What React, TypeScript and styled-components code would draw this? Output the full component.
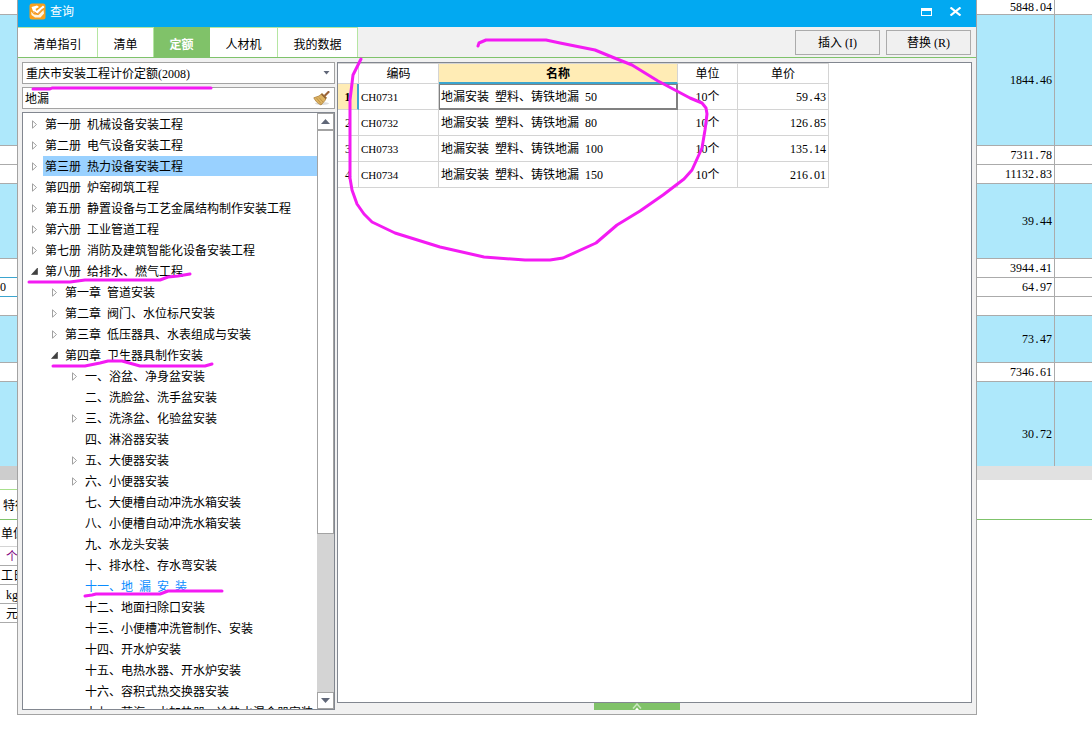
import React, { useState } from 'react';
import styled, { createGlobalStyle, css } from 'styled-components';

const Global = createGlobalStyle`
  *, *::before, *::after { box-sizing: border-box; }
  html, body { margin: 0; padding: 0; background: #fff; }
  body, button, input, select {
    font-family: 'Liberation Serif', 'Noto Sans CJK SC', serif;
    font-size: 12px;
    line-height: 18px;
    color: #000;
  }
  button { padding: 0; cursor: default; }
`;

const Desktop = styled.div`
  position: relative;
  display: grid;
  grid-template-columns: 17px minmax(0, 1fr) 115px;
  height: 100vh;
  overflow: hidden;
`;

/* ---------- sheet behind the dialog ---------- */

const Strip = styled.div`
  min-width: 0;
  overflow: hidden;
`;

const SheetTable = styled.table`
  width: 100%;
  table-layout: fixed;
  border-collapse: separate;
  border-spacing: 0;
`;

const SheetCell = styled.td<{ $h: number; $blue?: boolean; $line?: string; $side?: boolean; $top?: number; $align?: string }>`
  height: ${p => p.$h}px;
  padding: ${p => p.$top || 0}px 2px 0 0;
  text-align: ${p => p.$align || 'right'};
  white-space: nowrap;
  line-height: 14px;
  background: ${p => (p.$blue ? '#aee8fb' : '#fff')};
  border-bottom: ${p => (p.$line === 'none' ? '0' : `1px solid ${p.$line || '#ababab'}`)};
  border-right: ${p => (p.$side ? '1px solid #ababab' : '0')};
`;

const GrayBar = styled.div<{ $color: string }>`
  height: 14px;
  background: ${p => p.$color};
`;

const LowerPane = styled.div`
  height: 40px;
  border-bottom: 1px solid #7fc36b;
`;

const LowerTab = styled.div`
  height: 31px;
  margin-top: 9px;
  padding-left: 3px;
  line-height: 32px;
  white-space: nowrap;
  border-top: 1px solid #a8e08c;
  border-bottom: 1px solid #7fc36b;
`;

const UnitRow = styled.div<{ $h: number; $indent: number; $purple?: boolean; $line: string }>`
  height: ${p => p.$h}px;
  padding-left: ${p => p.$indent}px;
  line-height: ${p => p.$h + 1}px;
  white-space: nowrap;
  color: ${p => (p.$purple ? '#800080' : '#000')};
  border-bottom: 1px solid ${p => p.$line};
`;

/* ---------- dialog frame ---------- */

const Dialog = styled.section`
  display: flex;
  flex-direction: column;
  height: calc(100vh - 27px);
  min-width: 0;
  background: #f1f1f1;
  border: 1px solid #a3a3a3;
  border-top: 0;
`;

const TitleBar = styled.header`
  display: flex;
  align-items: center;
  height: 27px;
  flex: none;
  padding: 0 14px 4px 11px;
  background: #02a9f1;
  color: #fff;
`;

const Title = styled.h1`
  flex: 1;
  margin: 0 0 0 4px;
  font-size: 12px;
  font-weight: 400;
  line-height: 20px;
`;

const WindowButton = styled.button`
  display: flex;
  margin-left: 17px;
  border: 0;
  background: none;
`;

const TabBar = styled.nav`
  display: flex;
  align-items: flex-start;
  flex: none;
  height: 31px;
  padding-right: 5px;
  border-bottom: 1px solid #7fc36b;
`;

const Tab = styled.button<{ $w: number; $active?: boolean }>`
  width: ${p => p.$w}px;
  height: 30px;
  padding-top: 4px;
  border: 0;
  border-top: 1px solid #b5e6a2;
  border-right: 1px solid #b5e6a2;
  background: #fff;
  ${p =>
    p.$active &&
    css`
      background: #80c269;
      border-color: #80c269;
      color: #fff;
      font-weight: 700;
    `}
`;

const Actions = styled.div`
  display: flex;
  gap: 6px;
  margin: 3px 0 0 auto;
`;

const ActionButton = styled.button`
  width: 85px;
  height: 25px;
  padding-top: 1px;
  border: 1px solid #ababab;
  background: #f0f0f0;
`;

const Body = styled.div`
  display: flex;
  flex: 1;
  gap: 2px;
  min-height: 0;
  padding: 4px;
`;

/* ---------- left column ---------- */

const Side = styled.div`
  display: flex;
  flex-direction: column;
  flex: none;
  gap: 3px;
  width: 313px;
`;

const Field = styled.div`
  display: flex;
  align-items: center;
  flex: none;
  height: 22px;
  padding-right: 4px;
  border: 1px solid #a3a3a3;
  background: #fff;
`;

const LibrarySelect = styled.select`
  flex: 1;
  height: 20px;
  padding: 1px 0 0 3px;
  border: 0;
  outline: 0;
  background: none;
  appearance: none;
`;

const SearchInput = styled.input`
  flex: 1;
  min-width: 0;
  height: 20px;
  padding: 0 0 0 2px;
  border: 0;
  outline: 0;
  background: none;
`;

const IconButton = styled.button`
  display: flex;
  border: 0;
  background: none;
`;

const TreeFrame = styled.div`
  display: flex;
  flex: 1;
  min-height: 0;
  border: 1px solid #828790;
  background: #fff;
`;

const TreeList = styled.ul`
  flex: 1;
  min-width: 0;
  margin: 0;
  padding: 1px 0 0;
  overflow: hidden;
  list-style: none;
`;

const TreeItem = styled.li<{ $level: number }>`
  display: flex;
  align-items: center;
  height: 21px;
  padding-left: ${p => 8 + p.$level * 20}px;
`;

const Toggle = styled.button`
  display: flex;
  flex: none;
  width: 12px;
  border: 0;
  background: none;
`;

const TreeLabel = styled.span<{ $selected?: boolean; $match?: boolean }>`
  flex: 1;
  height: 20px;
  margin-bottom: 1px;
  padding-left: 2px;
  overflow: hidden;
  line-height: 22px;
  white-space: nowrap;
  color: ${p => (p.$match ? '#0a8cff' : '#000')};
  background: ${p => (p.$selected ? '#99d1ff' : 'transparent')};
`;

const HalfWidth = styled.span`
  font-family: 'Liberation Mono', monospace;
  font-size: 10px;
  line-height: 1;
`;

const ScrollTrack = styled.div`
  display: flex;
  flex-direction: column;
  flex: none;
  width: 17px;
  background: #d4d4d4;
`;

const ScrollButton = styled.button`
  display: flex;
  align-items: center;
  justify-content: center;
  flex: none;
  height: 17px;
  border: 1px solid #a3a3a3;
  background: #fff;
`;

const ScrollThumb = styled.div`
  flex: 403;
  border: 1px solid #a3a3a3;
  background: #fff;
`;

const ScrollRest = styled.div`
  flex: 159;
`;

/* ---------- result panel ---------- */

const Main = styled.div`
  display: flex;
  flex: 1;
  flex-direction: column;
  align-items: center;
  min-width: 0;
`;

const ResultFrame = styled.div`
  flex: 1;
  width: 100%;
  min-height: 0;
  border: 1px solid #828790;
  background: #fff;
`;

const ResultTable = styled.table`
  width: 491px;
  table-layout: fixed;
  border-collapse: separate;
  border-spacing: 0;
  border-top: 1px solid #d4d4d4;
`;

const HeadCell = styled.th<{ $w: number; $active?: boolean }>`
  width: ${p => p.$w}px;
  height: 20px;
  padding: 1px 0 0;
  line-height: 16px;
  font-weight: ${p => (p.$active ? 700 : 400)};
  background: ${p => (p.$active ? '#ffecb5' : '#fff')};
  border-right: 1px solid #d4d4d4;
  border-bottom: ${p => (p.$active ? '2px solid #3ba5cf' : '1px solid #d4d4d4')};
`;

const Cell = styled.td<{ $align?: string; $small?: boolean }>`
  height: 26px;
  padding: 0 2px;
  font-size: ${p => (p.$small ? 11 : 12)}px;
  text-align: ${p => p.$align || 'left'};
  white-space: nowrap;
  border-right: 1px solid #d4d4d4;
  border-bottom: 1px solid #d4d4d4;
`;

const FocusCell = styled(Cell)`
  box-shadow: inset 0 0 0 1px #808080;
  border-color: #808080;
`;

const RowNumber = styled.th<{ $active?: boolean }>`
  height: 26px;
  padding: 0;
  font-weight: ${p => (p.$active ? 700 : 400)};
  background: ${p => (p.$active ? '#ffecb5' : '#fff')};
  border-right: ${p => (p.$active ? '2px solid #3ba5cf' : '1px solid #d4d4d4')};
  border-bottom: 1px solid #d4d4d4;
`;

const ExpandHandle = styled.button`
  display: flex;
  justify-content: center;
  flex: none;
  width: 86px;
  height: 7px;
  margin-right: 36px;
  border: 0;
  background: #80c269;
`;

const Ink = styled.svg`
  position: absolute;
  top: 0;
  left: 0;
  pointer-events: none;
`;

/* ---------- data ---------- */

type SheetRow = { h: number; value?: string; blue?: boolean; left?: string; accent?: boolean; top?: number; last?: boolean };

const sheetRows: SheetRow[] = [
  { h: 15, value: '5848.04' },
  { h: 131, value: '1844.46', blue: true },
  { h: 19, value: '7311.78' },
  { h: 19, value: '11132.83' },
  { h: 75, value: '39.44', blue: true },
  { h: 19, value: '3944.41', accent: true },
  { h: 19, value: '64.97', left: '0', accent: true },
  { h: 19 },
  { h: 47, value: '73.47', blue: true },
  { h: 19, value: '7346.61' },
  { h: 84, value: '30.72', blue: true, top: 20, last: true },
];

type Node = { level: number; text: string; state?: 'open' | 'closed'; match?: boolean };

const nodes: Node[] = [
  { level: 0, text: '第一册 机械设备安装工程', state: 'closed' },
  { level: 0, text: '第二册 电气设备安装工程', state: 'closed' },
  { level: 0, text: '第三册 热力设备安装工程', state: 'closed' },
  { level: 0, text: '第四册 炉窑砌筑工程', state: 'closed' },
  { level: 0, text: '第五册 静置设备与工艺金属结构制作安装工程', state: 'closed' },
  { level: 0, text: '第六册 工业管道工程', state: 'closed' },
  { level: 0, text: '第七册 消防及建筑智能化设备安装工程', state: 'closed' },
  { level: 0, text: '第八册 给排水、燃气工程', state: 'open' },
  { level: 1, text: '第一章 管道安装', state: 'closed' },
  { level: 1, text: '第二章 阀门、水位标尺安装', state: 'closed' },
  { level: 1, text: '第三章 低压器具、水表组成与安装', state: 'closed' },
  { level: 1, text: '第四章 卫生器具制作安装', state: 'open' },
  { level: 2, text: '一、浴盆、净身盆安装', state: 'closed' },
  { level: 2, text: '二、洗脸盆、洗手盆安装' },
  { level: 2, text: '三、洗涤盆、化验盆安装', state: 'closed' },
  { level: 2, text: '四、淋浴器安装' },
  { level: 2, text: '五、大便器安装', state: 'closed' },
  { level: 2, text: '六、小便器安装', state: 'closed' },
  { level: 2, text: '七、大便槽自动冲洗水箱安装' },
  { level: 2, text: '八、小便槽自动冲洗水箱安装' },
  { level: 2, text: '九、水龙头安装' },
  { level: 2, text: '十、排水栓、存水弯安装' },
  { level: 2, text: '十一、地 漏 安 装', match: true },
  { level: 2, text: '十二、地面扫除口安装' },
  { level: 2, text: '十三、小便槽冲洗管制作、安装' },
  { level: 2, text: '十四、开水炉安装' },
  { level: 2, text: '十五、电热水器、开水炉安装' },
  { level: 2, text: '十六、容积式热交换器安装' },
  { level: 2, text: '十七、蒸汽、水加热器、冷热水混合器安装' },
];

const results = [
  { code: 'CH0731', name: '地漏安装 塑料、铸铁地漏 50', unit: '10个', price: '59.43' },
  { code: 'CH0732', name: '地漏安装 塑料、铸铁地漏 80', unit: '10个', price: '126.85' },
  { code: 'CH0733', name: '地漏安装 塑料、铸铁地漏 100', unit: '10个', price: '135.14' },
  { code: 'CH0734', name: '地漏安装 塑料、铸铁地漏 150', unit: '10个', price: '216.01' },
];

const tabs = [
  { label: '清单指引', w: 80 },
  { label: '清单', w: 56 },
  { label: '定额', w: 56 },
  { label: '人材机', w: 68 },
  { label: '我的数据', w: 80 },
];

/* Text whose spaces and full stops are half an ideograph wide. */
function Spaced({ text }: { text: string }) {
  return (
    <>
      {text.split(/([ .])/).map((part, i) => (i % 2 ? <HalfWidth key={i}>{part}</HalfWidth> : part))}
    </>
  );
}

function LogoIcon() {
  return (
    <svg width="17" height="17" viewBox="0 0 17 17" aria-hidden="true">
      <rect x="0.5" y="0.5" width="16" height="16" rx="2.5" fill="#f9a01b" />
      <path d="M2.500 4L8 2.500 10 4 6.500 6 7.500 8 14 2.500 15.500 4 9 11 4.500 9.500z" fill="#fff" />
      <path d="M2 8.500l3 3 4.500 0.500 5-5 0.500 3.500-3.500 4H6L2.500 12z" fill="#fff4e0" />
      <path d="M4.500 8.500l4 2.500 5.500-5.500" stroke="#e87d0c" fill="none" />
    </svg>
  );
}

function BroomIcon() {
  return (
    <svg width="17" height="15" viewBox="0 0 17 15" aria-hidden="true">
      <ellipse cx="9" cy="12.500" rx="7" ry="1.500" fill="#dcdcdc" />
      <path d="M15.500 1L12 4.500" stroke="#9a6238" strokeWidth="2.200" strokeLinecap="round" />
      <path d="M9 2.500l4.500 4-1.500 3-4 4.500C4.500 12.500 2 9.500 0.800 6.800L6 5z" fill="#ddb363" stroke="#a5762f" strokeWidth="0.700" />
      <path d="M3.500 7l4.500 5.500M6 6.500l4 4.500" stroke="#b98a3f" strokeWidth="0.800" />
      <path d="M8.500 3l4.500 4.500" stroke="#8a5a30" strokeWidth="1.300" />
    </svg>
  );
}

function Arrow({ open }: { open: boolean }) {
  return (
    <svg width="7" height="9" viewBox="0 0 7 9" aria-hidden="true">
      {open ? (
        <path d="M6.500 1v6.500H0.500z" fill="#404040" stroke="#262626" strokeWidth="0.500" />
      ) : (
        <path d="M1.500 0.800L5.500 4.500 1.500 8.200z" fill="#fff" stroke="#a0a0a0" />
      )}
    </svg>
  );
}

function Triangle({ up }: { up?: boolean }) {
  return (
    <svg width="9" height="5" viewBox="0 0 9 5" aria-hidden="true">
      <path d={up ? 'M0 5L4.500 0 9 5z' : 'M0 0L4.500 5 9 0z'} fill="#606778" />
    </svg>
  );
}

const inkPaths = [
  'M33 89H50L52 88H211',
  'M29 282H70L85 280H160L168 277 178 276 190 274',
  'M53 366H85L100 363 108 361H122L140 366H205L212 364',
  'M85 596L92 595 96 594H160L168 591H222',
  'M478 46L479 43 486 40H546L560 43 595 50 612 57 632 65 658 81 690 98 702 103 706 108 707 114 705 130 702 148 692 170 684 179 663 195 640 211 617 225 596 243 563 258 550 260H525L484 257 440 247 395 233 372 222 364 214 357 204 352 190 350 178V100L353 75 361 59',
];

export default function App() {
  const [activeTab, setActiveTab] = useState('定额');
  const [query, setQuery] = useState('地漏');
  const [selected, setSelected] = useState(2);

  return (
    <>
      <Global />
      <Desktop>
        <Strip>
          <SheetTable>
            <tbody>
              {sheetRows.map((r, i) => (
                <tr key={i}>
                  <SheetCell
                    $h={r.h}
                    $blue={r.blue}
                    $align="left"
                    $line={r.last ? 'none' : r.accent ? '#3ba5cf' : undefined}
                  >
                    {r.left}
                  </SheetCell>
                </tr>
              ))}
            </tbody>
          </SheetTable>
          <GrayBar $color="#cdcdcd" />
          <LowerTab>特征</LowerTab>
          <UnitRow $h={27} $indent={1} $line="#d4d4d4">单位</UnitRow>
          <UnitRow $h={19} $indent={6} $purple $line="#ababab">个</UnitRow>
          <UnitRow $h={19} $indent={1} $line="#ababab">工日</UnitRow>
          <UnitRow $h={19} $indent={6} $line="#ababab">kg</UnitRow>
          <UnitRow $h={19} $indent={6} $line="#ababab">元</UnitRow>
        </Strip>

        <Dialog aria-label="查询">
          <TitleBar>
            <LogoIcon />
            <Title>查询</Title>
            <WindowButton aria-label="最大化">
              <svg width="11" height="8" viewBox="0 0 11 8" aria-hidden="true">
                <path d="M0 0h11v8H0zM1 3v4h9V3z" fill="#fff" fillRule="evenodd" />
              </svg>
            </WindowButton>
            <WindowButton aria-label="关闭">
              <svg width="13" height="9" viewBox="0 0 13 9" aria-hidden="true">
                <path d="M1.500 0.500l10 8M11.500 0.500l-10 8" stroke="#fff" strokeWidth="2.200" />
              </svg>
            </WindowButton>
          </TitleBar>

          <TabBar>
            {tabs.map(t => (
              <Tab key={t.label} $w={t.w} $active={t.label === activeTab} onClick={() => setActiveTab(t.label)}>
                {t.label}
              </Tab>
            ))}
            <Actions>
              <ActionButton>插入 (I)</ActionButton>
              <ActionButton>替换 (R)</ActionButton>
            </Actions>
          </TabBar>

          <Body>
            <Side>
              <Field>
                <LibrarySelect aria-label="定额库">
                  <option>重庆市安装工程计价定额(2008)</option>
                </LibrarySelect>
                <svg width="7" height="4" viewBox="0 0 7 4" aria-hidden="true">
                  <path d="M0.500 0h6L3.500 3.500z" fill="#606778" />
                </svg>
              </Field>
              <Field>
                <SearchInput aria-label="搜索" value={query} onChange={e => setQuery(e.target.value)} />
                <IconButton aria-label="清除" onClick={() => setQuery('')}>
                  <BroomIcon />
                </IconButton>
              </Field>
              <TreeFrame>
                <TreeList>
                  {nodes.map((n, i) => (
                    <TreeItem key={n.text} $level={n.level} onClick={() => setSelected(i)}>
                      <Toggle as={n.state ? 'button' : 'span'} aria-label={n.state ? n.text : undefined}>
                        {n.state && <Arrow open={n.state === 'open'} />}
                      </Toggle>
                      <TreeLabel $selected={i === selected} $match={n.match}>
                        <Spaced text={n.text} />
                      </TreeLabel>
                    </TreeItem>
                  ))}
                </TreeList>
                <ScrollTrack>
                  <ScrollButton aria-label="向上滚动"><Triangle up /></ScrollButton>
                  <ScrollThumb />
                  <ScrollRest />
                  <ScrollButton aria-label="向下滚动"><Triangle /></ScrollButton>
                </ScrollTrack>
              </TreeFrame>
            </Side>

            <Main>
              <ResultFrame>
                <ResultTable>
                  <thead>
                    <tr>
                      <HeadCell $w={21} />
                      <HeadCell $w={80}>编码</HeadCell>
                      <HeadCell $w={239} $active>名称</HeadCell>
                      <HeadCell $w={60}>单位</HeadCell>
                      <HeadCell $w={91}>单价</HeadCell>
                    </tr>
                  </thead>
                  <tbody>
                    {results.map((r, i) => (
                      <tr key={r.code}>
                        <RowNumber scope="row" $active={i === 0}>{i + 1}</RowNumber>
                        <Cell $small>{r.code}</Cell>
                        <Cell as={i === 0 ? FocusCell : undefined}><Spaced text={r.name} /></Cell>
                        <Cell $align="center">{r.unit}</Cell>
                        <Cell $align="right"><Spaced text={r.price} /></Cell>
                      </tr>
                    ))}
                  </tbody>
                </ResultTable>
              </ResultFrame>
              <ExpandHandle aria-label="展开">
                <svg width="10" height="7" viewBox="0 0 10 7" aria-hidden="true">
                  <path d="M1 5.500L5 1l4 4.500" stroke="#cbe8c0" strokeWidth="1.500" fill="none" />
                  <path d="M3 7l2-2.500L7 7z" fill="#fff" />
                </svg>
              </ExpandHandle>
            </Main>
          </Body>
        </Dialog>

        <Strip>
          <SheetTable>
            <colgroup>
              <col width="78" />
              <col />
            </colgroup>
            <tbody>
              {sheetRows.map((r, i) => (
                <tr key={i}>
                  <SheetCell $h={r.h} $blue={r.blue} $top={r.top} $line={r.last ? 'none' : undefined} $side>
                    {r.value && <Spaced text={r.value} />}
                  </SheetCell>
                  <SheetCell $h={r.h} $blue={r.blue} $line={r.last ? 'none' : undefined} />
                </tr>
              ))}
            </tbody>
          </SheetTable>
          <GrayBar $color="#e1e1e1" />
          <LowerPane />
        </Strip>

        <Ink width="720" height="620" viewBox="0 0 720 620" aria-hidden="true">
          {inkPaths.map(d => (
            <path key={d} d={d} fill="none" stroke="#f31bf3" strokeWidth="3" strokeLinecap="round" strokeLinejoin="round" />
          ))}
        </Ink>
      </Desktop>
    </>
  );
}
